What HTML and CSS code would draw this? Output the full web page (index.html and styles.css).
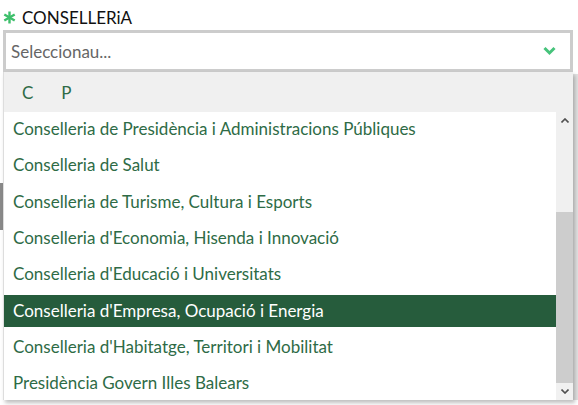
FILE: index.html
```html
<!DOCTYPE html>
<html lang="ca">
<head>
    <meta charset="UTF-8">
    <meta name="viewport" content="width=device-width, initial-scale=1.0">
    <title>Conselleria</title>
    <link rel="stylesheet" href="styles.css">
</head>
<body>
    <div class="page-edge"></div>
    <div class="page-right"></div>
    <div class="field">
        <label class="field-label">
            <svg class="required" width="13" height="13" viewBox="0 0 13 13">
                <g stroke="#3dbf6b" stroke-width="2.4">
                    <line x1="6.5" y1="0.5" x2="6.5" y2="12.5"/>
                    <line x1="1.3" y1="3.5" x2="11.7" y2="9.5"/>
                    <line x1="1.3" y1="9.5" x2="11.7" y2="3.5"/>
                </g>
            </svg>
            CONSELLERiA
        </label>
        <div class="select-box">
            <span class="placeholder">Seleccionau...</span>
            <svg class="chevron" width="13" height="10" viewBox="0 0 13 10">
                <path d="M1.5 2 L6.5 7 L11.5 2" fill="none" stroke="#46c37b" stroke-width="3"/>
            </svg>
        </div>
        <div class="dropdown">
            <div class="letters">
                <span>C</span>
                <span>P</span>
            </div>
            <div class="list-wrap">
                <ul class="options">
                    <li>Conselleria de Presidència i Administracions Públiques</li>
                    <li>Conselleria de Salut</li>
                    <li>Conselleria de Turisme, Cultura i Esports</li>
                    <li>Conselleria d'Economia, Hisenda i Innovació</li>
                    <li>Conselleria d'Educació i Universitats</li>
                    <li class="active">Conselleria d'Empresa, Ocupació i Energia</li>
                    <li>Conselleria d'Habitatge, Territori i Mobilitat</li>
                    <li>Presidència Govern Illes Balears</li>
                </ul>
                <div class="scrollbar">
                    <div class="arrow">
                        <svg width="8" height="5" viewBox="0 0 8 5"><path d="M0.5 4.5 L4 1 L7.5 4.5" fill="none" stroke="#505050" stroke-width="1.6"/></svg>
                    </div>
                    <div class="track">
                        <div class="thumb"></div>
                    </div>
                    <div class="arrow arrow-down">
                        <svg width="8" height="5" viewBox="0 0 8 5"><path d="M0.5 0.5 L4 4 L7.5 0.5" fill="none" stroke="#505050" stroke-width="1.6"/></svg>
                    </div>
                </div>
            </div>
        </div>
    </div>
</body>
</html>
```

FILE: styles.css
```css
body {
    margin: 0;
    font-family: Lato, "Open Sans", sans-serif;
    background: #fff;
    position: relative;
    height: 405px;
    overflow: hidden;
}
.page-edge {
    position: absolute;
    left: 0;
    top: 183px;
    width: 3px;
    height: 47px;
    background: #8a8a8a;
}
.page-right {
    position: absolute;
    right: 0;
    top: 74px;
    width: 5px;
    height: 326px;
    background: #e2e2e2;
}
.field {
    position: relative;
    padding: 6px 5px 0 3px;
}
.field-label {
    display: flex;
    align-items: center;
    height: 22px;
    font-size: 17px;
    color: #111;
    margin-bottom: 2px;
}
.required {
    display: block;
    margin-right: 6px;
}
.select-box {
    display: flex;
    align-items: center;
    justify-content: space-between;
    height: 36px;
    border: 3px solid #cccccc;
    padding: 0 14px 0 5px;
    background: #fff;
}
.placeholder {
    font-size: 17px;
    color: #666;
}
.chevron {
    display: block;
}
.dropdown {
    position: absolute;
    left: 3px;
    right: 5px;
    top: 72px;
    background: #fff;
    border-left: 1px solid #ddd;
    box-shadow: 2px 3px 4px rgba(0, 0, 0, 0.25);
}
.letters {
    display: flex;
    gap: 28px;
    align-items: center;
    height: 40px;
    padding-left: 18px;
    background: #f0f0f0;
    font-size: 17px;
    color: #2e6b46;
}
.list-wrap {
    display: flex;
    height: 288px;
}
.options {
    flex: 1;
    list-style: none;
    margin: 0;
    padding: 1px 0 0;
}
.options li {
    height: 32px;
    line-height: 32px;
    margin-bottom: 4.33px;
    padding-left: 9px;
    font-size: 17px;
    color: #2e6b46;
    white-space: nowrap;
}
.options li.active {
    background: #265c3c;
    color: #fff;
}
.scrollbar {
    width: 17px;
    display: flex;
    flex-direction: column;
    background: #f0f0f0;
}
.arrow {
    height: 17px;
    display: flex;
    align-items: center;
    justify-content: center;
}
.arrow-down {
    background: #f1f1f1;
}
.track {
    flex: 1;
    display: flex;
    flex-direction: column;
    justify-content: flex-end;
}
.thumb {
    height: 171px;
    background: #cdcdcd;
}
```
